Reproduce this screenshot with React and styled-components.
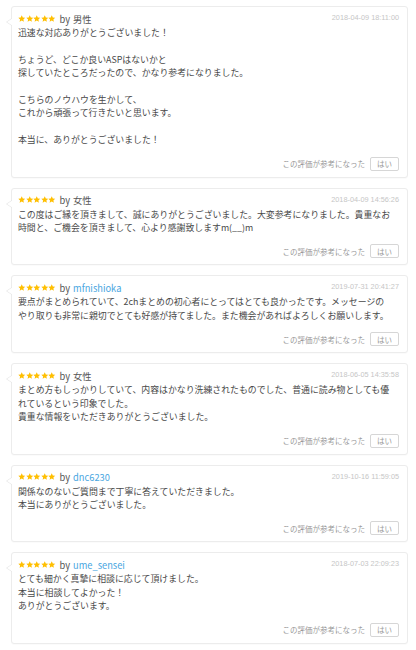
import React from "react";
import styled, { createGlobalStyle } from "styled-components";

const Global = createGlobalStyle`
  html, body { margin: 0; padding: 0; background: #fff; }
  body { font-family: "Noto Sans CJK JP", "Noto Sans", sans-serif; }
`;

const List = styled.div`
  display: flex;
  flex-direction: column;
  gap: 10px;
  padding: 6px 8px 6px 11px;
`;

const Card = styled.div`
  position: relative;
  background: #fff;
  border: 1px solid #ececec;
  border-radius: 3px;
  padding: 5px 8px 6px 6px;
  box-shadow: 0 1px 1px rgba(0, 0, 0, 0.02);
  &::before, &::after {
    content: "";
    position: absolute;
    top: 11px;
    width: 0;
    height: 0;
    border-style: solid;
  }
  &::before {
    left: -6px;
    border-width: 4px 6px 4px 0;
    border-color: transparent #e6e6e6 transparent transparent;
  }
  &::after {
    left: -5px;
    border-width: 4px 6px 4px 0;
    border-color: transparent #fff transparent transparent;
  }
`;

const Header = styled.div`
  display: flex;
  align-items: center;
  justify-content: space-between;
  height: 13px;
`;

const Author = styled.div`
  display: flex;
  align-items: center;
  gap: 3px;
  font-size: 9.3px;
  color: #555;
`;

const Stars = styled.span`
  display: inline-flex;
  gap: 0;
  margin-right: 1px;
`;

const Name = styled.span`
  color: ${(p) => (p.$link ? "#49a6df" : "#555")};
`;

const DateText = styled.div`
  font-family: "Liberation Sans", Arial, sans-serif;
  font-size: 7.3px;
  color: #c6c6c6;
  align-self: flex-start;
  margin-top: 1px;
`;

const Body = styled.div`
  font-size: 8.9px;
  line-height: 13.4px;
  color: #484848;
  white-space: pre-wrap;
  margin-top: 1px;
`;

const Footer = styled.div`
  display: flex;
  justify-content: flex-end;
  align-items: center;
  gap: 5px;
  margin-top: 10px;
`;

const Helpful = styled.span`
  font-size: 7.5px;
  color: #999;
`;

const YesButton = styled.span`
  display: inline-flex;
  align-items: center;
  justify-content: center;
  height: 12px;
  padding: 0 6px;
  border: 1px solid #d6d6d6;
  border-radius: 2px;
  font-size: 7.5px;
  color: #999;
  background: #fff;
`;

const Star = () => (
  <svg width="7.5" height="7.5" viewBox="0 0 24 24">
    <path
      d="M12 1l3.3 7.1 7.7.8-5.8 5.2 1.7 7.7L12 17.8l-6.9 4 1.7-7.7L1 8.9l7.7-.8z"
      fill="#ffbf00"
    />
  </svg>
);

const reviews = [
  {
    name: "男性",
    date: "2018-04-09 18:11:00",
    text:
      "迅速な対応ありがとうございました！\n\nちょうど、どこか良いASPはないかと\n探していたところだったので、かなり参考になりました。\n\nこちらのノウハウを生かして、\nこれから頑張って行きたいと思います。\n\n本当に、ありがとうございました！",
  },
  {
    name: "女性",
    date: "2018-04-09 14:56:26",
    text:
      "この度はご縁を頂きまして、誠にありがとうございました。大変参考になりました。貴重なお\n時間と、ご機会を頂きまして、心より感謝致しますm(__)m",
  },
  {
    name: "mfnishioka",
    link: true,
    date: "2019-07-31 20:41:27",
    text:
      "要点がまとめられていて、2chまとめの初心者にとってはとても良かったです。メッセージの\nやり取りも非常に親切でとても好感が持てました。また機会があればよろしくお願いします。",
  },
  {
    name: "女性",
    date: "2018-06-05 14:35:58",
    text:
      "まとめ方もしっかりしていて、内容はかなり洗練されたものでした、普通に読み物としても優\nれているという印象でした。\n貴重な情報をいただきありがとうございました。",
  },
  {
    name: "dnc6230",
    link: true,
    date: "2019-10-16 11:59:05",
    text: "関係なのないご質問まで丁寧に答えていただきました。\n本当にありがとうございました。",
  },
  {
    name: "ume_sensei",
    link: true,
    date: "2018-07-03 22:09:23",
    text: "とても細かく真摯に相談に応じて頂けました。\n本当に相談してよかった！\nありがとうございます。",
  },
];

export default function App() {
  return (
    <>
      <Global />
      <List>
        {reviews.map((r, i) => (
          <Card key={i}>
            <Header>
              <Author>
                <Stars>
                  {[0, 1, 2, 3, 4].map((s) => (
                    <Star key={s} />
                  ))}
                </Stars>
                <span>by</span>
                <Name $link={r.link}>{r.name}</Name>
              </Author>
              <DateText>{r.date}</DateText>
            </Header>
            <Body>{r.text}</Body>
            <Footer>
              <Helpful>この評価が参考になった</Helpful>
              <YesButton>はい</YesButton>
            </Footer>
          </Card>
        ))}
      </List>
    </>
  );
}
